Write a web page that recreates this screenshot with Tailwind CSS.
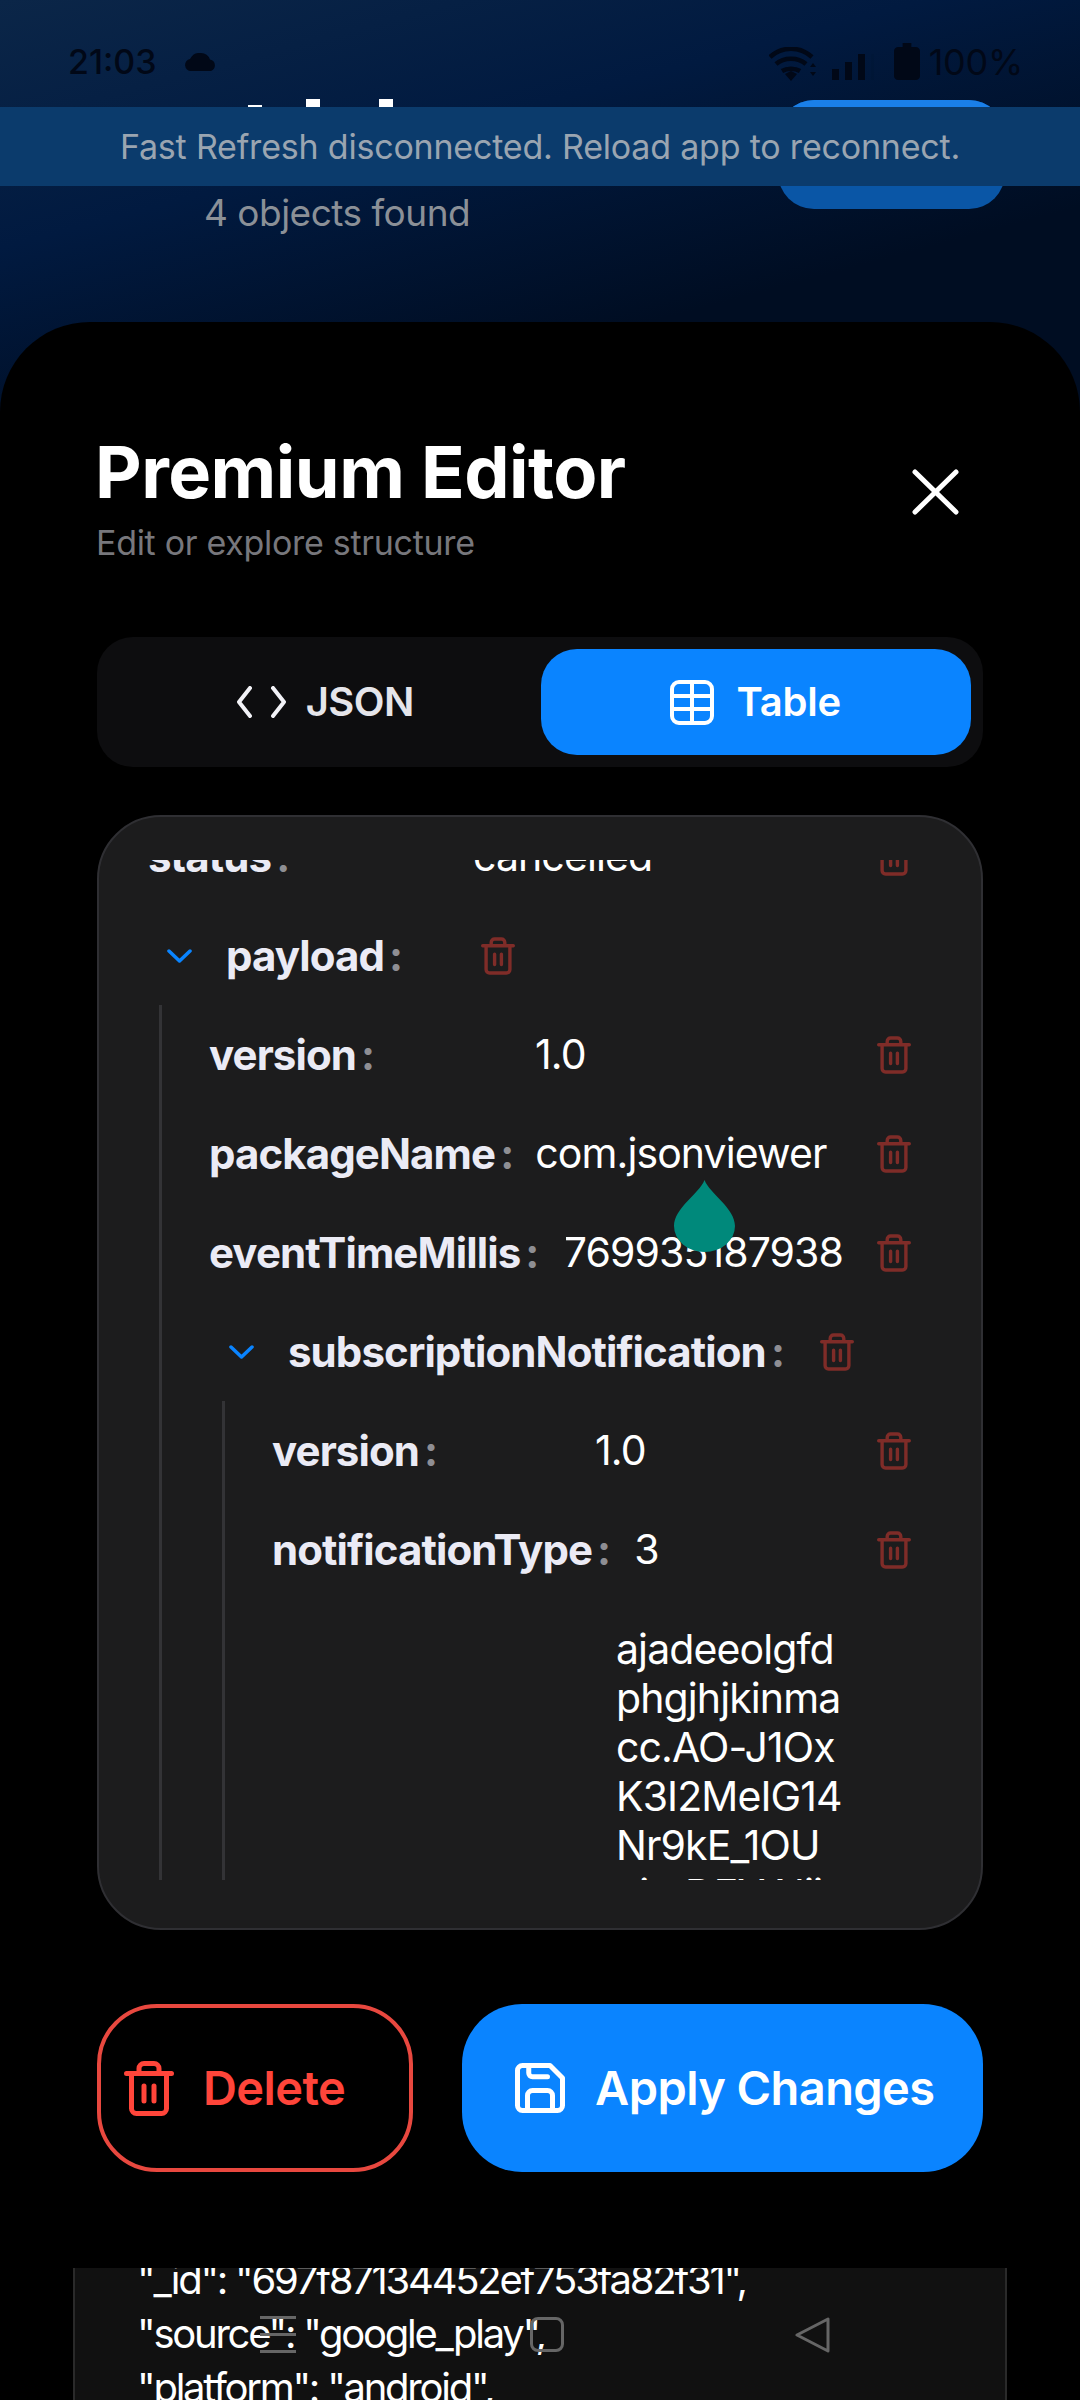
<!DOCTYPE html>
<html lang="en">
<head>
  <meta charset="UTF-8" />
  <meta name="viewport" content="width=device-width, initial-scale=1.0" />
  <title>Premium Editor</title>
  <script src="https://cdn.jsdelivr.net/npm/@tailwindcss/browser@4"></script>
</head>
<body class="bg-black">
<div class="relative w-[1080px] h-[2400px] overflow-hidden [font-family:Inter,sans-serif]">

  <!-- Page behind the sheet -->
  <div class="h-[420px] bg-linear-[165deg] from-[#0b2648] via-[#011a40] via-35% to-[#000d22] to-70%">
    <div class="h-[100px] flex items-start justify-between pl-[68px] pr-[57px] pt-[40px] text-[#010817]">
      <div class="flex items-center gap-[28px]">
        <span class="text-[34px] leading-[44px] font-medium">21:03</span>
        <svg width="32" height="18" viewBox="0 0 32 18" fill="currentColor"><path d="M6 18a6 6 0 0 1-1-11.9 A11 11 0 0 1 16 0a10 10 0 0 1 9 6.500 A6 6 0 0 1 26 18z"/></svg>
      </div>
      <div class="flex items-center">
        <svg width="48" height="34" viewBox="0 0 48 34" fill="none" stroke="currentColor" stroke-width="4.500" class="mt-[4px]">
          <path d="M1 10c12-11 30-11 42 0M7 17c8-7 22-7 30 0M13 24c5-3 13-3 18 0"/>
          <path d="M16 27l6-3 6 3-6 7z" fill="currentColor" stroke="none"/>
          <path d="M41 20l3-4 3 4zM41 25l3 4 3-4z" fill="currentColor" stroke="none"/>
        </svg>
        <svg width="42" height="26" viewBox="0 0 42 26" fill="currentColor" class="ml-[15px] mt-[10px]">
          <rect x="0" y="15" width="7" height="11"/><rect x="13" y="8" width="7" height="18"/><rect x="26" y="0" width="7" height="26"/><rect x="39" y="0" width="3" height="26" opacity="0.08"/>
        </svg>
        <svg width="26" height="37" viewBox="0 0 24 37" preserveAspectRatio="none" fill="currentColor" class="ml-[20px] -mt-[2px]"><path d="M8 0h8v4h4a4 4 0 0 1 4 4v25a4 4 0 0 1-4 4H4a4 4 0 0 1-4-4V8a4 4 0 0 1 4-4h4z"/></svg>
        <span class="ml-[9px] text-[36px] leading-[44px] tracking-[-0.3px]">100%</span>
      </div>
    </div>
    <div class="h-[109px] flex justify-between pl-[204px] pr-[75px]">
      <p class="pt-[91px] text-[37px] leading-[44px] text-[#8b9097] whitespace-nowrap tracking-[-0.5px]">4 objects found</p>
      <div class="w-[227px] rounded-[36px] bg-[#0a56a6] overflow-hidden"><div class="h-[7px] bg-[#1a7fe8]"></div></div>
    </div>
  </div>

  <!-- What is left of the page title above the banner -->
  <div class="absolute top-[105px] left-[248px] w-[14px] h-[2px] bg-white"></div>
  <div class="absolute top-[99px] left-[306px] w-[14px] h-[8px] bg-white"></div>
  <div class="absolute top-[99px] left-[379px] w-[14px] h-[8px] bg-white"></div>

  <!-- Fast Refresh banner -->
  <div class="absolute top-[107px] inset-x-0 h-[79px] bg-[#0b3b6c] flex items-center justify-center text-[34px] text-[#9aa5b1] tracking-[-0.2px] whitespace-nowrap">
    Fast Refresh disconnected. Reload app to reconnect.
  </div>

  <!-- Sheet -->
  <div class="absolute top-[322px] inset-x-0 bottom-0 bg-black rounded-t-[90px] px-[97px] pt-[110px] flex flex-col">
    <div class="flex justify-between items-start">
      <div>
        <h1 class="-ml-[2px] text-[72px] leading-[80px] font-bold text-white tracking-[-0.5px]">Premium Editor</h1>
        <p class="-ml-[1px] mt-[9px] text-[34px] leading-[44px] text-[#77777c] tracking-[-0.3px]">Edit or explore structure</p>
      </div>
      <svg width="47" height="46" viewBox="0 0 47 46" fill="none" stroke="white" stroke-width="5" stroke-linecap="round" class="mt-[37px] mr-[24px]"><path d="M3 3l41 40M44 3L3 43"/></svg>
    </div>

    <div class="mt-[72px] h-[130px] shrink-0 rounded-[36px] bg-[#0d0d0f] p-[12px] flex">
      <div class="w-[432px] flex items-center justify-center gap-[19px] text-[#e5e5ea] text-[40px] font-semibold tracking-[-0.6px]">
        <svg width="51" height="32" viewBox="0 0 51 32" fill="none" stroke="#f2f2f7" stroke-width="4" stroke-linecap="round" stroke-linejoin="round"><path d="M14 2L3 16l11 14M37 2l11 14-11 14"/></svg>
        <span>JSON</span>
      </div>
      <div class="w-[431px] rounded-[36px] bg-[#0a84ff] flex items-center justify-center gap-[22px] text-white text-[40px] font-semibold tracking-[-0.2px]">
        <svg width="44" height="45" viewBox="0 0 44 45" fill="none" stroke="white" stroke-width="4"><rect x="2" y="2" width="40" height="41" rx="7"/><path d="M2 16h40M2 29h40M22 2v41"/></svg>
        <span>Table</span>
      </div>
    </div>

    <!-- Tree -->
    <div class="mt-[48px] h-[1115px] shrink-0 rounded-[64px] border-2 border-[#2f2f33] bg-[#1c1c1d] pt-[43px] pb-[48px] pl-[49px] pr-[70px]">
      <div class="h-full overflow-hidden text-[41px] tracking-[-0.9px] text-white">
        <div class="-mt-[53px]">
          <div class="h-[99px] flex items-center">
            <div class="min-w-[301px] text-[42px] font-bold tracking-[-0.9px] text-[#ebebf5] whitespace-nowrap">status<span class="ml-[5px] text-[#8e8e93]">:</span></div>
            <div class="flex-1 ml-[24px] whitespace-nowrap">cancelled</div>
            <svg width="34" height="38" viewBox="2 1 20 22" fill="none" stroke="#7f2c28" stroke-width="2" stroke-linecap="round" stroke-linejoin="round"><path d="M3 6h18M5 6v14a2 2 0 0 0 2 2h10a2 2 0 0 0 2-2V6M8 6V4a2 2 0 0 1 2-2h4a2 2 0 0 1 2 2v2M10 11v6M14 11v6"/></svg>
          </div>

          <div class="h-[99px] flex items-center pl-[19px]">
            <svg width="25" height="14" viewBox="0 0 25 14" fill="none" stroke="#0a84ff" stroke-width="3.500" stroke-linecap="round" stroke-linejoin="round" class="mr-[34px]"><path d="M2 2l10.500 10L23 2"/></svg>
            <div class="min-w-[219px] text-[42px] font-bold tracking-[-0.9px] text-[#ebebf5] whitespace-nowrap">payload<span class="ml-[5px] text-[#8e8e93]">:</span></div>
            <svg width="34" height="38" viewBox="2 1 20 22" fill="none" stroke="#7f2c28" stroke-width="2" stroke-linecap="round" stroke-linejoin="round" class="ml-[36px]"><path d="M3 6h18M5 6v14a2 2 0 0 0 2 2h10a2 2 0 0 0 2-2V6M8 6V4a2 2 0 0 1 2-2h4a2 2 0 0 1 2 2v2M10 11v6M14 11v6"/></svg>
          </div>

          <div class="ml-[11px] border-l-[3px] border-[#333336] pl-[47px]">
            <div class="h-[99px] flex items-center">
              <div class="min-w-[301px] text-[42px] font-bold tracking-[-0.9px] text-[#ebebf5] whitespace-nowrap">version<span class="ml-[5px] text-[#8e8e93]">:</span></div>
              <div class="flex-1 ml-[25px] whitespace-nowrap">1.0</div>
              <svg width="34" height="38" viewBox="2 1 20 22" fill="none" stroke="#7f2c28" stroke-width="2" stroke-linecap="round" stroke-linejoin="round"><path d="M3 6h18M5 6v14a2 2 0 0 0 2 2h10a2 2 0 0 0 2-2V6M8 6V4a2 2 0 0 1 2-2h4a2 2 0 0 1 2 2v2M10 11v6M14 11v6"/></svg>
            </div>
            <div class="h-[99px] flex items-center">
              <div class="min-w-[301px] text-[42px] font-bold tracking-[-0.9px] text-[#ebebf5] whitespace-nowrap">packageName<span class="ml-[5px] text-[#8e8e93]">:</span></div>
              <div class="flex-1 ml-[22px] whitespace-nowrap">com.jsonviewer</div>
              <svg width="34" height="38" viewBox="2 1 20 22" fill="none" stroke="#7f2c28" stroke-width="2" stroke-linecap="round" stroke-linejoin="round"><path d="M3 6h18M5 6v14a2 2 0 0 0 2 2h10a2 2 0 0 0 2-2V6M8 6V4a2 2 0 0 1 2-2h4a2 2 0 0 1 2 2v2M10 11v6M14 11v6"/></svg>
            </div>
            <div class="h-[99px] flex items-center">
              <div class="min-w-[301px] shrink-0 text-[42px] font-bold tracking-[-0.9px] text-[#ebebf5] whitespace-nowrap">eventTimeMillis<span class="ml-[5px] text-[#8e8e93]">:</span></div>
              <div class="flex-1 min-w-0 ml-[28px] mr-[34px] overflow-hidden flex justify-end whitespace-nowrap">1769935187938</div>
              <svg width="34" height="38" viewBox="2 1 20 22" fill="none" stroke="#7f2c28" stroke-width="2" stroke-linecap="round" stroke-linejoin="round" class="shrink-0"><path d="M3 6h18M5 6v14a2 2 0 0 0 2 2h10a2 2 0 0 0 2-2V6M8 6V4a2 2 0 0 1 2-2h4a2 2 0 0 1 2 2v2M10 11v6M14 11v6"/></svg>
            </div>

            <div class="h-[99px] flex items-center pl-[20px]">
              <svg width="25" height="14" viewBox="0 0 25 14" fill="none" stroke="#0a84ff" stroke-width="3.500" stroke-linecap="round" stroke-linejoin="round" class="mr-[34px]"><path d="M2 2l10.500 10L23 2"/></svg>
              <div class="min-w-[219px] text-[42px] font-bold tracking-[-0.9px] text-[#ebebf5] whitespace-nowrap">subscriptionNotification<span class="ml-[5px] text-[#8e8e93]">:</span></div>
              <svg width="34" height="38" viewBox="2 1 20 22" fill="none" stroke="#7f2c28" stroke-width="2" stroke-linecap="round" stroke-linejoin="round" class="ml-[36px]"><path d="M3 6h18M5 6v14a2 2 0 0 0 2 2h10a2 2 0 0 0 2-2V6M8 6V4a2 2 0 0 1 2-2h4a2 2 0 0 1 2 2v2M10 11v6M14 11v6"/></svg>
            </div>

            <div class="ml-[13px] border-l-[3px] border-[#333336] pl-[47px]">
              <div class="h-[99px] flex items-center">
                <div class="min-w-[298px] text-[42px] font-bold tracking-[-0.9px] text-[#ebebf5] whitespace-nowrap">version<span class="ml-[5px] text-[#8e8e93]">:</span></div>
                <div class="flex-1 ml-[25px] whitespace-nowrap">1.0</div>
                <svg width="34" height="38" viewBox="2 1 20 22" fill="none" stroke="#7f2c28" stroke-width="2" stroke-linecap="round" stroke-linejoin="round"><path d="M3 6h18M5 6v14a2 2 0 0 0 2 2h10a2 2 0 0 0 2-2V6M8 6V4a2 2 0 0 1 2-2h4a2 2 0 0 1 2 2v2M10 11v6M14 11v6"/></svg>
              </div>
              <div class="h-[99px] flex items-center">
                <div class="min-w-[298px] text-[42px] font-bold tracking-[-0.9px] text-[#ebebf5] whitespace-nowrap">notificationType<span class="ml-[5px] text-[#8e8e93]">:</span></div>
                <div class="flex-1 ml-[24px] whitespace-nowrap">3</div>
                <svg width="34" height="38" viewBox="2 1 20 22" fill="none" stroke="#7f2c28" stroke-width="2" stroke-linecap="round" stroke-linejoin="round"><path d="M3 6h18M5 6v14a2 2 0 0 0 2 2h10a2 2 0 0 0 2-2V6M8 6V4a2 2 0 0 1 2-2h4a2 2 0 0 1 2 2v2M10 11v6M14 11v6"/></svg>
              </div>
              <div class="pl-[344px] pt-[26px] leading-[49px] whitespace-nowrap">
                ajadeeolgfd<br />phgjhjkinma<br />cc.AO-J1Ox<br />K3I2MeIG14<br />Nr9kE_1OU<br />njxrDEY.Nii
              </div>
            </div>
          </div>
        </div>
      </div>
    </div>

    <!-- Actions -->
    <div class="mt-[74px] h-[168px] shrink-0 flex gap-[49px]">
      <div class="w-[316px] rounded-[60px] border-[4px] border-[#e8483f] flex items-center pl-[23px] gap-[29px] text-[#ff453a] text-[47px] font-semibold tracking-[-0.6px]">
        <svg width="50" height="55" viewBox="2 1 20 22" fill="none" stroke="#ff453a" stroke-width="2" stroke-linecap="round" stroke-linejoin="round"><path d="M3 6h18M5 6v14a2 2 0 0 0 2 2h10a2 2 0 0 0 2-2V6M8 6V4a2 2 0 0 1 2-2h4a2 2 0 0 1 2 2v2M10 11v6M14 11v6"/></svg>
        <span>Delete</span>
      </div>
      <div class="w-[522px] rounded-[60px] bg-[#0a84ff] flex items-center justify-center gap-[29px] text-white text-[47px] font-semibold tracking-[-0.6px]">
        <svg width="52" height="50" viewBox="2 2 20 20" fill="none" stroke="white" stroke-width="2" stroke-linecap="round" stroke-linejoin="round" class="ml-[4px]"><path d="M5 3h11l5 5v11a2 2 0 0 1-2 2H5a2 2 0 0 1-2-2V5a2 2 0 0 1 2-2z"/><path d="M7.500 3v3a1.500 1.500 0 0 0 1.500 1.500h6"/><path d="M7 21v-6a2 2 0 0 1 2-2h6a2 2 0 0 1 2 2v6"/></svg>
        <span>Apply Changes</span>
      </div>
    </div>

    <!-- JSON preview under the sheet -->
    <div class="mt-[96px] -mx-[24px] flex-1 min-h-0 overflow-hidden bg-[#111111] border-x-2 border-[#2a2a2a] pl-[62px] text-white text-[40px] leading-[54px] tracking-[-2.25px] whitespace-nowrap">
      <div class="-mt-[15px]">
        <p>"_id": "697f87134452ef753fa82f31",</p>
        <p>"source": "google_play",</p>
        <p>"platform": "android",</p>
      </div>
    </div>
  </div>

  <!-- Text cursor handle -->
  <svg width="61" height="72" viewBox="0 0 61 72" class="absolute left-[674px] top-[1180px]"><path d="M30.500 0C36 14 61 28 61 46a30.500 26 0 0 1-61 0C0 28 25 14 30.500 0z" fill="#00897b"/></svg>

  <!-- Android navigation buttons -->
  <div class="absolute left-[260px] top-[2316px] w-[36px] h-[37px] flex flex-col justify-between">
    <div class="h-[3px] bg-[#666]"></div><div class="h-[3px] bg-[#666]"></div><div class="h-[3px] bg-[#666]"></div>
  </div>
  <div class="absolute left-[530px] top-[2317px] w-[34px] h-[35px] rounded-[8px] border-[3px] border-[#666]"></div>
  <svg width="35" height="36" viewBox="0 0 35 36" fill="none" stroke="#666" stroke-width="3" stroke-linejoin="round" class="absolute left-[795px] top-[2317px]"><path d="M33 2v32L2 18z"/></svg>
</div>
</body>
</html>
